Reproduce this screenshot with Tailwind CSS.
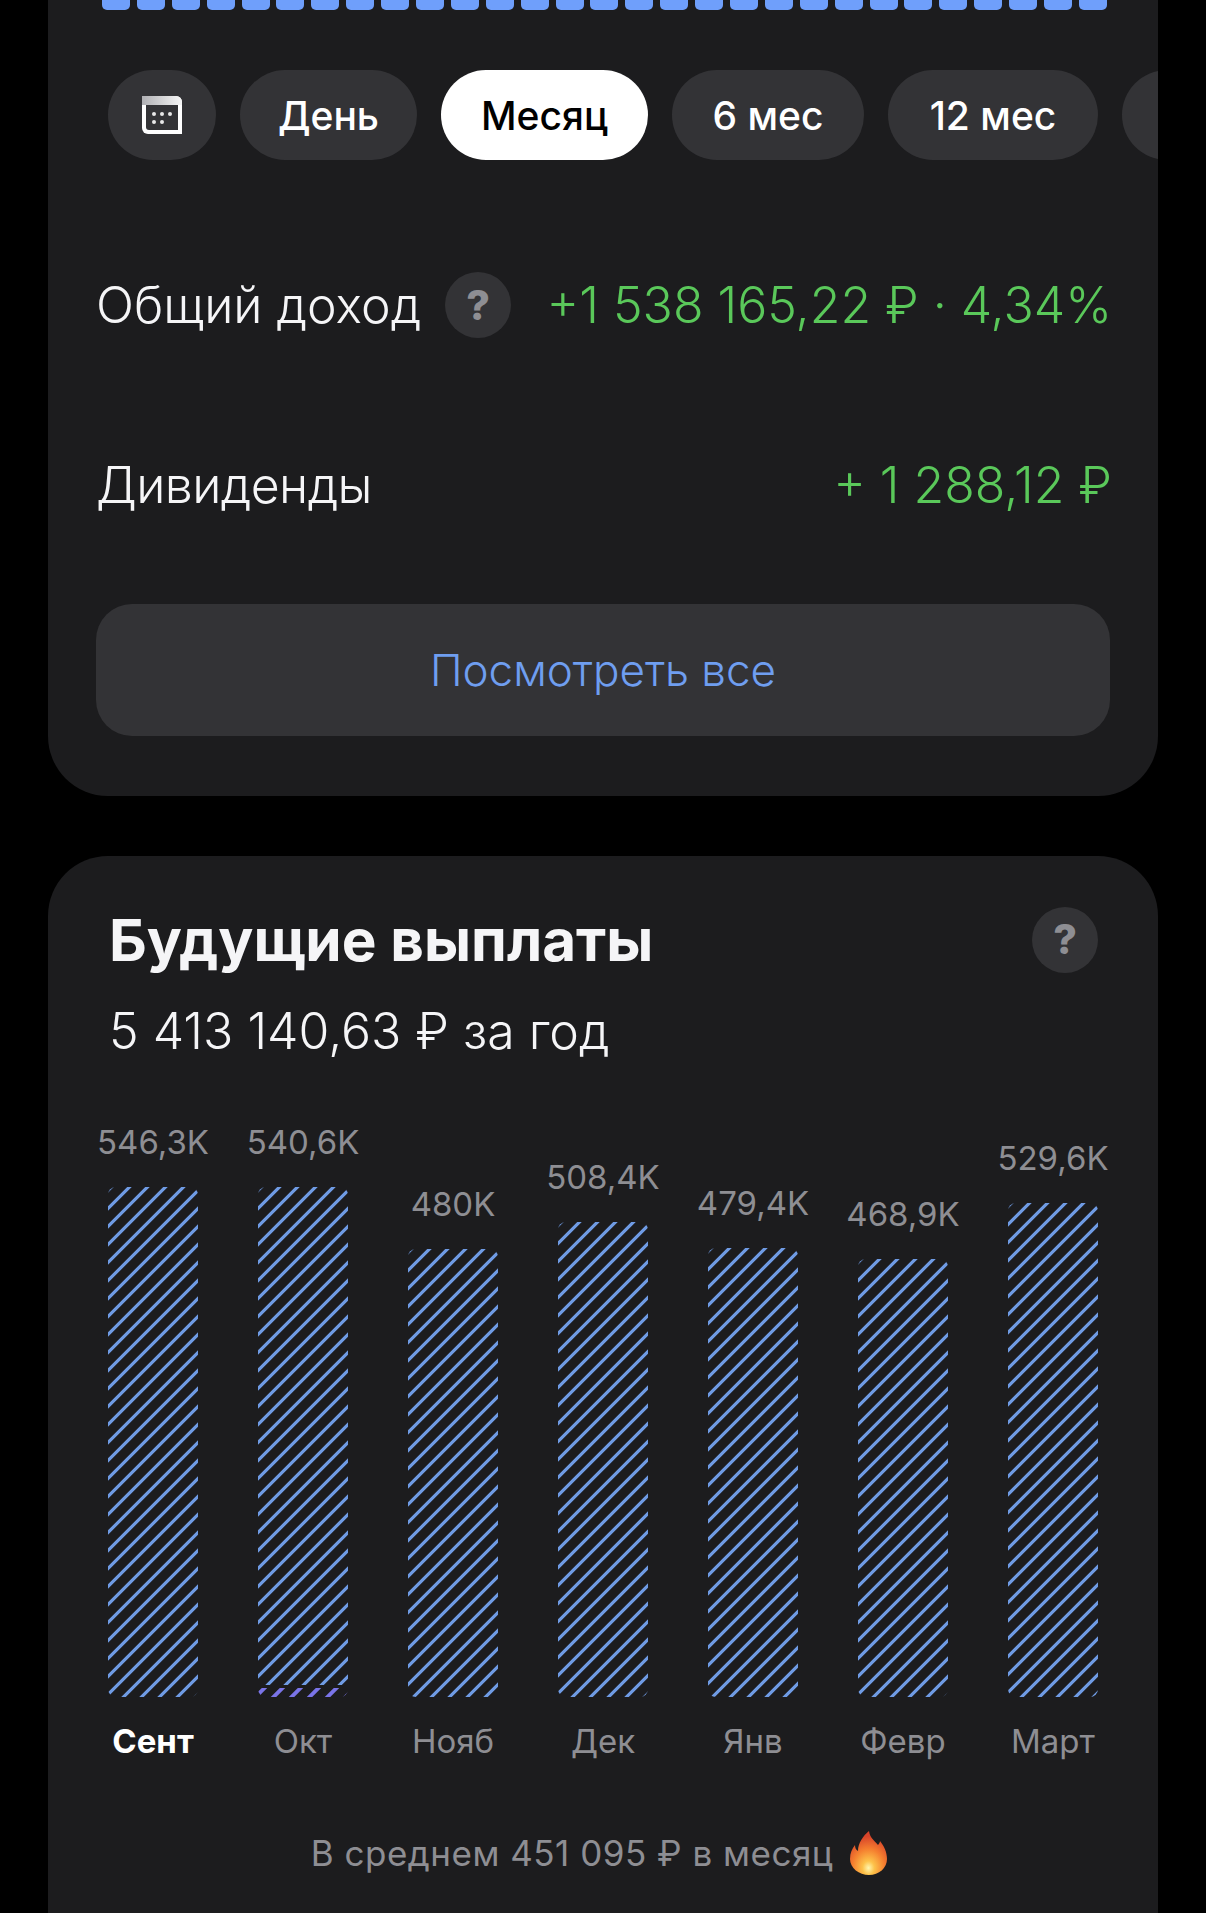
<!DOCTYPE html>
<html lang="ru">
<head>
    <meta charset="UTF-8">
    <title>Доход</title>
    <script src="https://cdn.jsdelivr.net/npm/@tailwindcss/browser@4"></script>
</head>
<body class="bg-black font-['Inter','Liberation_Sans',sans-serif]">
    <svg width="0" height="0" class="absolute">
        <defs>
            <pattern id="hatch" width="18" height="18" patternUnits="userSpaceOnUse">
                <path d="M-2 5.5L5.5 -2M-2 23.5L23.5 -2" stroke="#6f9be4" stroke-width="3.2" fill="none"/>
            </pattern>
            <pattern id="hatch-violet" width="18" height="18" patternUnits="userSpaceOnUse">
                <path d="M-2 8.5L8.5 -2M-2 26.5L26.5 -2" stroke="#7a74e8" stroke-width="3.8" fill="none"/>
            </pattern>
            <radialGradient id="flame" cx="50%" cy="84%" r="72%">
                <stop offset="0" stop-color="#fff6b0"/>
                <stop offset="0.22" stop-color="#fdc24a"/>
                <stop offset="0.6" stop-color="#f57f2f"/>
                <stop offset="1" stop-color="#d8442a"/>
            </radialGradient>
        </defs>
    </svg>

    <div class="h-[1913px] overflow-hidden px-12 flex flex-col gap-[60px]">
        <!-- Income card -->
        <section class="h-[796px] shrink-0 bg-[#1c1c1e] rounded-b-[60px] overflow-hidden">
            <div class="flex justify-between pl-[54px] pr-[51px]">
                <div class="w-[28px] h-[10px] bg-[#6f9ffb] rounded-b-[5px]"></div>
                <div class="w-[28px] h-[10px] bg-[#6f9ffb] rounded-b-[5px]"></div>
                <div class="w-[28px] h-[10px] bg-[#6f9ffb] rounded-b-[5px]"></div>
                <div class="w-[28px] h-[10px] bg-[#6f9ffb] rounded-b-[5px]"></div>
                <div class="w-[28px] h-[10px] bg-[#6f9ffb] rounded-b-[5px]"></div>
                <div class="w-[28px] h-[10px] bg-[#6f9ffb] rounded-b-[5px]"></div>
                <div class="w-[28px] h-[10px] bg-[#6f9ffb] rounded-b-[5px]"></div>
                <div class="w-[28px] h-[10px] bg-[#6f9ffb] rounded-b-[5px]"></div>
                <div class="w-[28px] h-[10px] bg-[#6f9ffb] rounded-b-[5px]"></div>
                <div class="w-[28px] h-[10px] bg-[#6f9ffb] rounded-b-[5px]"></div>
                <div class="w-[28px] h-[10px] bg-[#6f9ffb] rounded-b-[5px]"></div>
                <div class="w-[28px] h-[10px] bg-[#6f9ffb] rounded-b-[5px]"></div>
                <div class="w-[28px] h-[10px] bg-[#6f9ffb] rounded-b-[5px]"></div>
                <div class="w-[28px] h-[10px] bg-[#6f9ffb] rounded-b-[5px]"></div>
                <div class="w-[28px] h-[10px] bg-[#6f9ffb] rounded-b-[5px]"></div>
                <div class="w-[28px] h-[10px] bg-[#6f9ffb] rounded-b-[5px]"></div>
                <div class="w-[28px] h-[10px] bg-[#6f9ffb] rounded-b-[5px]"></div>
                <div class="w-[28px] h-[10px] bg-[#6f9ffb] rounded-b-[5px]"></div>
                <div class="w-[28px] h-[10px] bg-[#6f9ffb] rounded-b-[5px]"></div>
                <div class="w-[28px] h-[10px] bg-[#6f9ffb] rounded-b-[5px]"></div>
                <div class="w-[28px] h-[10px] bg-[#6f9ffb] rounded-b-[5px]"></div>
                <div class="w-[28px] h-[10px] bg-[#6f9ffb] rounded-b-[5px]"></div>
                <div class="w-[28px] h-[10px] bg-[#6f9ffb] rounded-b-[5px]"></div>
                <div class="w-[28px] h-[10px] bg-[#6f9ffb] rounded-b-[5px]"></div>
                <div class="w-[28px] h-[10px] bg-[#6f9ffb] rounded-b-[5px]"></div>
                <div class="w-[28px] h-[10px] bg-[#6f9ffb] rounded-b-[5px]"></div>
                <div class="w-[28px] h-[10px] bg-[#6f9ffb] rounded-b-[5px]"></div>
                <div class="w-[28px] h-[10px] bg-[#6f9ffb] rounded-b-[5px]"></div>
                <div class="w-[28px] h-[10px] bg-[#6f9ffb] rounded-b-[5px]"></div>
            </div>

            <!-- Period pills -->
            <div class="flex gap-6 pl-[60px] mt-[60px] h-[90px] text-[39px] font-medium text-white leading-none">
                <div class="w-[108px] shrink-0 rounded-full bg-[#333336] flex items-center justify-center">
                    <svg width="40" height="38" viewBox="0 0 40 38">
                        <defs>
                            <linearGradient id="calTop" x1="0" y1="0" x2="1" y2="0">
                                <stop offset="0" stop-color="#b0b0b4"/>
                                <stop offset="1" stop-color="#f7f7f7"/>
                            </linearGradient>
                        </defs>
                        <path d="M0 0H34a6 6 0 0 1 6 6V38H6a6 6 0 0 1-6-6Z" fill="#fff"/>
                        <path d="M0 0H34a6 6 0 0 1 6 6V9H0Z" fill="url(#calTop)"/>
                        <path d="M4 9H36V34H7a3 3 0 0 1-3-3Z" fill="#333336"/>
                        <g fill="#e8e8e8"><circle cx="12" cy="18" r="2"/><circle cx="20" cy="18" r="2"/><circle cx="28" cy="18" r="2"/><circle cx="12" cy="26" r="2"/><circle cx="20" cy="26" r="2"/></g>
                    </svg>
                </div>
                <div class="w-[177px] shrink-0 rounded-full bg-[#333336] flex items-center justify-center">День</div>
                <div class="w-[207px] shrink-0 rounded-full bg-white text-black flex items-center justify-center">Месяц</div>
                <div class="w-[192px] shrink-0 rounded-full bg-[#333336] flex items-center justify-center">6 мес</div>
                <div class="w-[210px] shrink-0 rounded-full bg-[#333336] flex items-center justify-center">12 мес</div>
                <div class="w-[150px] shrink-0 rounded-full bg-[#333336]"></div>
            </div>

            <div class="px-12">
                <div class="flex items-center justify-between mt-[112px] h-[66px] text-[50px] font-[350] leading-none">
                    <div class="flex items-center gap-6 text-[#f5f5f7]">
                        <span>Общий доход</span>
                        <span class="w-[66px] h-[66px] rounded-full bg-[#333336] text-[#8e8e93] text-[41px] font-extrabold flex items-center justify-center">?</span>
                    </div>
                    <span class="text-[#5ac85a] -mr-[2px]">+1 538 165,22 ₽ · 4,34%</span>
                </div>
                <div class="flex items-center justify-between mt-[114px] h-[66px] text-[50px] font-[350] leading-none">
                    <span class="text-[#f5f5f7] tracking-[-0.6px]">Дивиденды</span>
                    <span class="text-[#5ac85a] -mr-[2px]">+ 1 288,12 ₽</span>
                </div>
                <div class="mt-[86px] h-[132px] rounded-[36px] bg-[#333336] text-[#6f9ef0] text-[44px] font-[350] flex items-center justify-center">Посмотреть все</div>
            </div>
        </section>

        <!-- Future payouts card -->
        <section class="flex-1 bg-[#1c1c1e] rounded-t-[60px] pt-[51px] px-12">
            <div class="flex justify-between pl-[13px] pr-[12px]">
                <div>
                    <h2 class="text-[58.4px] font-bold text-[#f5f5f7] leading-[66px]">Будущие выплаты</h2>
                    <p class="text-[50px] font-[350] text-[#f5f5f7] leading-[60px] mt-[28px]">5 413 140,63 ₽ за год</p>
                </div>
                <span class="w-[66px] h-[66px] rounded-full bg-[#333336] text-[#8e8e93] text-[41px] font-extrabold flex items-center justify-center">?</span>
            </div>

            <div class="h-[575px] mt-[61px] mx-[-18px] flex items-end text-[33px] leading-none text-[#8e8e93] text-center">
                <div class="w-[150px] flex flex-col items-center">
                    <span class="mb-[28px]">546,3K</span>
                    <svg width="90" height="510" class="rounded-[8px]"><rect width="90" height="510" fill="url(#hatch)"/></svg>
                </div>
                <div class="w-[150px] flex flex-col items-center">
                    <span class="mb-[28px]">540,6K</span>
                    <svg width="90" height="498" class="rounded-t-[8px]"><rect width="90" height="498" fill="url(#hatch)"/></svg>
                    <svg width="90" height="9" class="mt-[3px] rounded-b-[8px]"><rect width="90" height="9" fill="url(#hatch-violet)"/></svg>
                </div>
                <div class="w-[150px] flex flex-col items-center">
                    <span class="mb-[28px]">480K</span>
                    <svg width="90" height="448" class="rounded-[8px]"><rect width="90" height="448" fill="url(#hatch)"/></svg>
                </div>
                <div class="w-[150px] flex flex-col items-center">
                    <span class="mb-[28px]">508,4K</span>
                    <svg width="90" height="475" class="rounded-[8px]"><rect width="90" height="475" fill="url(#hatch)"/></svg>
                </div>
                <div class="w-[150px] flex flex-col items-center">
                    <span class="mb-[28px]">479,4K</span>
                    <svg width="90" height="449" class="rounded-[8px]"><rect width="90" height="449" fill="url(#hatch)"/></svg>
                </div>
                <div class="w-[150px] flex flex-col items-center">
                    <span class="mb-[28px]">468,9K</span>
                    <svg width="90" height="438" class="rounded-[8px]"><rect width="90" height="438" fill="url(#hatch)"/></svg>
                </div>
                <div class="w-[150px] flex flex-col items-center">
                    <span class="mb-[28px]">529,6K</span>
                    <svg width="90" height="494" class="rounded-[8px]"><rect width="90" height="494" fill="url(#hatch)"/></svg>
                </div>
            </div>

            <div class="mt-[24px] mx-[-18px] flex text-[33px] leading-[40px] text-[#8e8e93] text-center">
                <span class="w-[150px] font-bold text-white">Сент</span>
                <span class="w-[150px]">Окт</span>
                <span class="w-[150px]">Нояб</span>
                <span class="w-[150px]">Дек</span>
                <span class="w-[150px]">Янв</span>
                <span class="w-[150px]">Февр</span>
                <span class="w-[150px]">Март</span>
            </div>

            <div class="mt-[70px] pr-2 flex items-center justify-center gap-[17px] text-[35px] tracking-[0.5px] leading-[44px] text-[#8e8e93]">
                <span>В среднем 451 095 ₽ в месяц</span>
                <svg width="37" height="44" viewBox="0 0 37 44">
                    <path d="M19 0c1 7 5 9 9 14 1-1 2-3 2-4 4 5 7 11 7 18 0 9-8 16-18 16S0 37 0 28c0-6 2-10 5-14 0 3 1 5 3 6C8 12 13 5 19 0Z" fill="url(#flame)"/>
                </svg>
            </div>
        </section>
    </div>
</body>
</html>
